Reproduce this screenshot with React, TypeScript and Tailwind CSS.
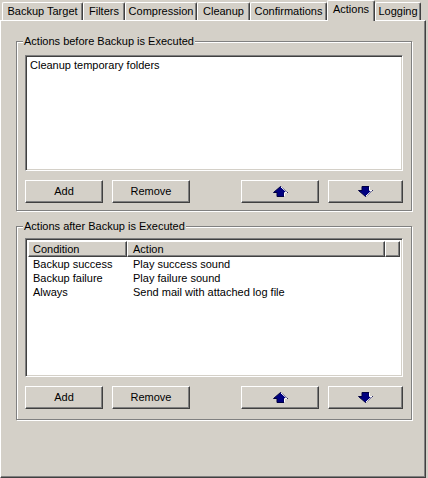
import React from 'react';

const FACE = 'bg-[#d4d0c8]';

interface TabProps {
  label: string;
  width: string;
  active?: boolean;
}

function Tab({ label, width, active }: TabProps) {
  if (active) {
    return (
      <div
        className={`relative z-10 -mb-px flex h-[21px] items-start justify-center rounded-t-[2px] border-l border-t border-r border-white border-r-[#404040] pt-[2px] shadow-[inset_-1px_0_0_#808080] ${FACE} ${width}`}
      >
        {label}
      </div>
    );
  }
  return (
    <div
      className={`flex h-[18px] items-center justify-center rounded-t-[2px] border-l border-t border-r border-white border-r-[#404040] shadow-[inset_-1px_0_0_#808080] ${width}`}
    >
      {label}
    </div>
  );
}

function Button({ children, width = 'w-[78px]' }: { children: React.ReactNode; width?: string }) {
  return (
    <div
      className={`flex h-[23px] items-center justify-center border border-white border-r-[#404040] border-b-[#404040] shadow-[inset_-1px_-1px_0_#808080] ${width}`}
    >
      {children}
    </div>
  );
}

function ArrowUp() {
  return (
    <svg width="15" height="11" viewBox="0 0 15 11">
      <polygon points="7.5,0.5 14.5,6.5 11,6.5 11,10.5 4,10.5 4,6.5 0.5,6.5" fill="#000080" stroke="#000040" strokeWidth="1" />
      <polyline points="8,1 14,6.5 11.5,6.5 11.5,10.5" fill="none" stroke="#ffffff" strokeWidth="1" />
    </svg>
  );
}

function ArrowDown() {
  return (
    <svg width="15" height="11" viewBox="0 0 15 11">
      <polygon points="4,0.5 11,0.5 11,4.5 14.5,4.5 7.5,10.5 0.5,4.5 4,4.5" fill="#000080" stroke="#000040" strokeWidth="1" />
      <polyline points="11.5,0.5 11.5,4.5 14,4.5 8,10" fill="none" stroke="#ffffff" strokeWidth="1" />
    </svg>
  );
}

function ButtonRow() {
  return (
    <div className="flex">
      <Button>Add</Button>
      <div className="ml-[9px]">
        <Button>Remove</Button>
      </div>
      <div className="ml-[51px]">
        <Button>
          <ArrowUp />
        </Button>
      </div>
      <div className="ml-[9px]">
        <Button width="w-[75px]">
          <ArrowDown />
        </Button>
      </div>
    </div>
  );
}

const sunken =
  'border border-[#808080] border-r-white border-b-white shadow-[inset_1px_1px_0_#404040,inset_-1px_-1px_0_#d4d0c8] bg-white';

const etched =
  'border border-[#808080] shadow-[1px_1px_0_#ffffff,inset_1px_1px_0_#ffffff]';

const afterRows = [
  { condition: 'Backup success', action: 'Play success sound' },
  { condition: 'Backup failure', action: 'Play failure sound' },
  { condition: 'Always', action: 'Send mail with attached log file' },
];

const headerCell =
  'flex h-[16px] items-center border-l border-t border-white border-r border-r-[#404040] shadow-[inset_-1px_-1px_0_#808080] border-b border-b-[#404040]';

export default function App() {
  return (
    <div
      className={`h-[478px] w-[428px] overflow-hidden text-[11px] leading-[13px] text-black font-['Liberation_Sans',Arial,sans-serif] ${FACE}`}
    >
      <div className="flex h-[20px] items-end pl-[2px]">
        <Tab label="Backup Target" width="w-[81px]" />
        <Tab label="Filters" width="w-[42px]" />
        <Tab label="Compression" width="w-[72px]" />
        <Tab label="Cleanup" width="w-[53px]" />
        <Tab label="Confirmations" width="w-[77px]" />
        <Tab label="Actions" width="w-[48px]" active />
        <Tab label="Logging" width="w-[46px]" />
      </div>

      <div className="h-[458px] w-[426px] border-l border-t border-white border-r border-b border-r-[#404040] border-b-[#404040] shadow-[inset_-1px_-1px_0_#808080]">
        <fieldset className={`ml-[15px] mt-[14px] w-[396px] px-[8px] pb-[7px] ${etched}`}>
          <legend className={`-ml-[2px] px-[1px] ${FACE}`}>Actions before Backup is Executed</legend>
          <div className={`mt-[7px] h-[116px] w-[378px] p-[2px] ${sunken}`}>
            <div className="h-[14px] pl-[2px] leading-[14px]">Cleanup temporary folders</div>
          </div>
          <div className="mt-[9px]">
            <ButtonRow />
          </div>
        </fieldset>

        <fieldset className={`ml-[15px] mt-[9px] w-[396px] px-[8px] pb-[10px] ${etched}`}>
          <legend className={`-ml-[2px] px-[1px] ${FACE}`}>Actions after Backup is Executed</legend>
          <div className={`mt-[5px] h-[139px] w-[378px] p-[2px] ${sunken}`}>
            <div className={`flex ${FACE}`}>
              <div className={`w-[99px] pl-[4px] ${headerCell}`}>Condition</div>
              <div className={`w-[258px] pl-[5px] ${headerCell}`}>Action</div>
              <div className={`flex-1 ${headerCell}`} />
            </div>
            {afterRows.map((row) => (
              <div key={row.condition} className="flex h-[14px] leading-[14px]">
                <div className="w-[99px] pl-[5px]">{row.condition}</div>
                <div className="pl-[6px]">{row.action}</div>
              </div>
            ))}
          </div>
          <div className="mt-[9px]">
            <ButtonRow />
          </div>
        </fieldset>
      </div>
    </div>
  );
}
